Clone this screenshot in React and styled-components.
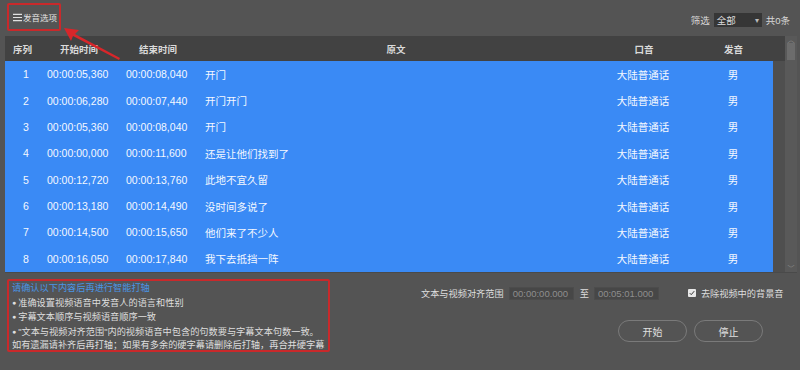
import styled, { createGlobalStyle } from "styled-components"

const GlobalStyle = createGlobalStyle`
  html, body {
    margin: 0;
    padding: 0;
    background: #545454;
  }
  * { box-sizing: border-box; }
`

const rows = [
  ["1", "00:00:05,360", "00:00:08,040", "开门"],
  ["2", "00:00:06,280", "00:00:07,440", "开门开门"],
  ["3", "00:00:05,360", "00:00:08,040", "开门"],
  ["4", "00:00:00,000", "00:00:11,600", "还是让他们找到了"],
  ["5", "00:00:12,720", "00:00:13,760", "此地不宜久留"],
  ["6", "00:00:13,180", "00:00:14,490", "没时间多说了"],
  ["7", "00:00:14,500", "00:00:15,650", "他们来了不少人"],
  ["8", "00:00:16,050", "00:00:17,840", "我下去抵挡一阵"],
]

export default function App() {
  return (
    <Page>
      <GlobalStyle />
      <Toolbar>
        <OptionsButton>
          <MenuIcon viewBox="0 0 10 9">
            <path d="M0 1h10M0 4.5h10M0 8h10" stroke="#e0e0e0" strokeWidth="1.2" />
          </MenuIcon>
          发音选项
        </OptionsButton>
        <Filter>
          <span>筛选</span>
          <Select>
            <span>全部</span>
            <Caret>▾</Caret>
          </Select>
          <span>共0条</span>
        </Filter>
      </Toolbar>

      <TableArea>
        <TableMain>
          <HeadRow>
            <HeadCell>序列</HeadCell>
            <HeadCell>开始时间</HeadCell>
            <HeadCell>结束时间</HeadCell>
            <HeadCell>原文</HeadCell>
            <HeadCell>口音</HeadCell>
            <HeadCell>发音</HeadCell>
          </HeadRow>
          <Body>
            <Rows>
              {rows.map((r) => (
                <Row key={r[0]}>
                  <Cell $center>{r[0]}</Cell>
                  <Cell>{r[1]}</Cell>
                  <Cell>{r[2]}</Cell>
                  <Cell>{r[3]}</Cell>
                  <Cell $center>大陆普通话</Cell>
                  <Cell $center>男</Cell>
                </Row>
              ))}
            </Rows>
          </Body>
        </TableMain>
        <Scrollbar>
          <ScrollArrow>︿</ScrollArrow>
          <Thumb />
          <ScrollSpace />
          <ScrollArrow>﹀</ScrollArrow>
        </Scrollbar>
      </TableArea>

      <Bottom>
        <Notice>
          <NoticeTitle>请确认以下内容后再进行智能打轴</NoticeTitle>
          <NoticeLine><Dot>●</Dot>准确设置视频语音中发音人的语言和性别</NoticeLine>
          <NoticeLine><Dot>●</Dot>字幕文本顺序与视频语音顺序一致</NoticeLine>
          <NoticeLine><Dot>●</Dot>"文本与视频对齐范围"内的视频语音中包含的句数要与字幕文本句数一致。</NoticeLine>
          <NoticeLine>如有遗漏请补齐后再打轴；如果有多余的硬字幕请删除后打轴，再合并硬字幕</NoticeLine>
        </Notice>
        <Controls>
          <RangeRow>
            <Label>文本与视频对齐范围</Label>
            <TimeInput>00:00:00.000</TimeInput>
            <Label>至</Label>
            <TimeInput>00:05:01.000</TimeInput>
            <Check>
              <svg viewBox="0 0 8 8" width="6" height="6">
                <path d="M1 4.2l2 2L7 1.5" stroke="#333" strokeWidth="1.3" fill="none" />
              </svg>
            </Check>
            <Label>去除视频中的背景音</Label>
          </RangeRow>
          <ButtonRow>
            <PillButton>开始</PillButton>
            <PillButton>停止</PillButton>
          </ButtonRow>
        </Controls>
      </Bottom>

      <Arrow viewBox="0 0 70 40" width="70" height="40">
        <polygon points="2,2 17,4 13,8 58,32 57,34 11,10 9,15" fill="#d8262a" />
      </Arrow>
    </Page>
  )
}

const Page = styled.div`
  position: relative;
  width: 800px;
  height: 370px;
  background: #545454;
  font-family: "Liberation Sans", "Noto Sans CJK SC", sans-serif;
  color: #e6e6e6;
  display: flex;
  flex-direction: column;
  overflow: hidden;
`

const Toolbar = styled.div`
  height: 36px;
  display: flex;
  justify-content: space-between;
  align-items: flex-start;
  padding: 3px 10px 0 7px;
`

const OptionsButton = styled.div`
  width: 54px;
  height: 28px;
  border: 2px solid #c9292b;
  border-radius: 2px;
  display: flex;
  align-items: center;
  gap: 1px;
  padding-left: 4px;
  font-size: 8.5px;
  color: #e4e4e4;
`

const MenuIcon = styled.svg`
  width: 9px;
  height: 9px;
`

const Filter = styled.div`
  display: flex;
  align-items: center;
  gap: 4px;
  margin-top: 10px;
  font-size: 9.5px;
  color: #d8d8d8;
`

const Select = styled.div`
  width: 48px;
  height: 14px;
  background: #363636;
  display: flex;
  align-items: center;
  justify-content: space-between;
  padding: 0 3px;
  color: #dcdcdc;
`

const Caret = styled.span`
  font-size: 8px;
  color: #bbb;
`

const TableArea = styled.div`
  height: 237px;
  margin-left: 5px;
  width: 792px;
  display: flex;
  border-bottom: 1px solid #4a4a4a;
`

const TableMain = styled.div`
  flex: 1;
  display: flex;
  flex-direction: column;
`

const HeadRow = styled.div`
  height: 25px;
  background: #424242;
  display: grid;
  grid-template-columns: 35px 78px 80px 396px 100px 79px 12px;
  align-items: center;
  font-size: 9.5px;
  font-weight: bold;
  color: #dadada;
`

const HeadCell = styled.div`
  text-align: center;
`

const Body = styled.div`
  flex: 1;
  padding-right: 12px;
  background: #4f4f4f;
`

const Rows = styled.div`
  height: 100%;
  background: #3a8af5;
  display: grid;
  grid-template-rows: repeat(8, 1fr);
`

const Row = styled.div`
  display: grid;
  grid-template-columns: 42px 79px 79px 388px 100px 80px;
  align-items: center;
  font-size: 10.5px;
  color: #f4f8ff;
`

const Cell = styled.div`
  text-align: ${(p) => (p.$center ? "center" : "left")};
  white-space: nowrap;
`

const Scrollbar = styled.div`
  width: 12px;
  background: #595959;
  display: flex;
  flex-direction: column;
  align-items: center;
`

const ScrollArrow = styled.div`
  height: 7px;
  font-size: 7px;
  line-height: 7px;
  color: #8a8a8a;
`

const Thumb = styled.div`
  width: 8px;
  height: 17px;
  background: #6c6c6c;
`

const ScrollSpace = styled.div`
  flex: 1;
`

const Bottom = styled.div`
  flex: 1;
  display: flex;
  padding: 6px 10px 0 7px;
`

const Notice = styled.div`
  width: 323px;
  height: 73px;
  border: 2px solid #c9292b;
  border-radius: 2px;
  padding: 1px 0 0 3px;
  font-size: 9.2px;
  line-height: 13.5px;
  white-space: nowrap;
  overflow: hidden;
`

const NoticeTitle = styled.div`
  color: #4a95e4;
`

const NoticeLine = styled.div`
  color: #dedede;
`

const Dot = styled.span`
  font-size: 7px;
  margin-right: 2px;
  vertical-align: 1px;
`

const Controls = styled.div`
  flex: 1;
  margin-left: 91px;
  display: flex;
  flex-direction: column;
`

const RangeRow = styled.div`
  margin-top: 8px;
  height: 12px;
  display: flex;
  align-items: center;
  gap: 5px;
  font-size: 9.2px;
`

const Label = styled.span`
  color: #dedede;
  white-space: nowrap;
`

const TimeInput = styled.div`
  width: 65px;
  height: 13px;
  background: #474747;
  border: 1px solid #4c4c4c;
  color: #8e8e8e;
  font-size: 9.5px;
  line-height: 11px;
  padding-left: 3px;
  margin-right: 1px;
`

const Check = styled.div`
  width: 8px;
  height: 8px;
  margin-left: 23px;
  background: #e8e8e8;
  border-radius: 1px;
  display: flex;
  align-items: center;
  justify-content: center;
`

const ButtonRow = styled.div`
  margin-top: 21px;
  display: flex;
  gap: 7px;
  padding-left: 197px;
`

const PillButton = styled.div`
  width: 69px;
  height: 22px;
  border: 1px solid #7a7a7a;
  border-radius: 11px;
  display: flex;
  align-items: center;
  justify-content: center;
  font-size: 10px;
  color: #e0e0e0;
`

const Arrow = styled.svg`
  position: absolute;
  left: 62px;
  top: 26px;
`
